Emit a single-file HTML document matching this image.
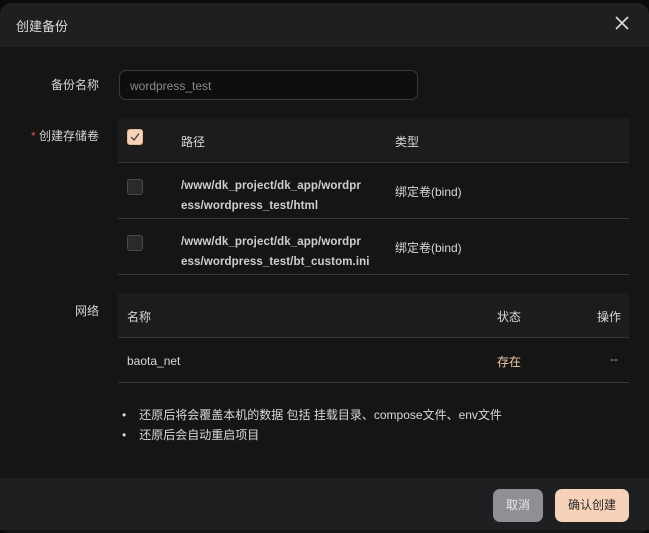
<!DOCTYPE html>
<html><head><meta charset="utf-8"><style>
*{margin:0;padding:0;box-sizing:border-box}
body{width:649px;height:533px;background:#0b0b0c;font-family:"Liberation Sans","Noto Sans CJK SC",sans-serif;color:#d6d6d6;font-size:12px;position:relative;overflow:hidden}
.dlg{position:absolute;left:0;top:3px;width:649px;height:530px;background:#151516;border-radius:12px 12px 10px 10px;overflow:hidden}
.hd{position:absolute;left:0;top:0;width:649px;height:44px;background:#1e1f21}
.hd .t{position:absolute;left:16px;top:13px;font-size:13px;color:#dcdcdc}
.x{position:absolute;left:615px;top:13px}
.lbl{position:absolute;right:550px;font-size:12px;color:#d4d4d4;white-space:nowrap}
.inp{position:absolute;left:119px;top:70px;width:299px;height:30px;border:1px solid #3a3a3d;border-radius:7px;background:#0e0e0f;color:#8c8c8c;font-size:12px;padding:8px 10px}
.abs{position:absolute}
.th{background:#1c1c1d}
.ln{position:absolute;left:118px;width:511px;height:1px;background:#37373a}
.cb{position:absolute;left:127px;width:16px;height:16px;border-radius:3px}
.s{position:absolute;white-space:nowrap;font-size:12px;color:#d8d8d8}
.p{font-weight:bold;color:#cfcfcf;font-size:11.5px;letter-spacing:0.1px}
.ft{position:absolute;left:0;top:478px;width:649px;height:52px;background:#1e1f21}
.btn{position:absolute;top:489px;height:33px;border-radius:7px;font-size:12px;text-align:center;line-height:33px}
</style></head><body>
<div class="dlg">
<div class="hd"><div class="t">创建备份</div>
<svg class="x" width="14" height="14" viewBox="0 0 14 14"><path d="M1 1L13 13M13 1L1 13" stroke="#ddd" stroke-width="1.6"/></svg></div>
</div>
<div class="lbl" style="top:76px">备份名称</div>
<div class="inp">wordpress_test</div>
<div class="lbl" style="top:127px"><span style="color:#d9534f">*</span> 创建存储卷</div>
<div class="abs th" style="left:118px;top:118px;width:511px;height:45px"></div>
<div class="ln" style="top:162px"></div>
<div class="ln" style="top:218px"></div>
<div class="ln" style="top:274px"></div>
<div class="cb" style="top:129px;background:#f6d3b8;border:1px solid #e5b894"><svg width="14" height="14" viewBox="0 0 14 14" style="position:absolute;left:0;top:0"><path d="M3 7L6 10L11 3.5" stroke="#333" stroke-width="1.2" fill="none"/></svg></div>
<div class="s" style="left:181px;top:133px">路径</div>
<div class="s" style="left:395px;top:133px">类型</div>
<div class="cb" style="top:179px;background:#2a2a2c;border:1px solid #4a4a4d"></div>
<div class="s p" style="left:181px;top:176px;line-height:20px">/www/dk_project/dk_app/wordpr<br>ess/wordpress_test/html</div>
<div class="s" style="left:395px;top:183px">绑定卷(bind)</div>
<div class="cb" style="top:235px;background:#2a2a2c;border:1px solid #4a4a4d"></div>
<div class="s p" style="left:181px;top:232px;line-height:20px">/www/dk_project/dk_app/wordpr<br>ess/wordpress_test/bt_custom.ini</div>
<div class="s" style="left:395px;top:239px">绑定卷(bind)</div>
<div class="lbl" style="top:302px">网络</div>
<div class="abs th" style="left:118px;top:293px;width:511px;height:44px"></div>
<div class="ln" style="top:337px"></div>
<div class="ln" style="top:382px"></div>
<div class="s" style="left:127px;top:308px">名称</div>
<div class="s" style="left:497px;top:308px">状态</div>
<div class="s" style="left:597px;top:308px">操作</div>
<div class="s" style="left:127px;top:354px">baota_net</div>
<div class="s" style="left:497px;top:353px;color:#f0c9a8">存在</div>
<div class="s" style="left:610px;top:352px;color:#aaa">--</div>
<div class="s" style="left:122px;top:406px"><span style="margin-right:13px">•</span>还原后将会覆盖本机的数据 包括 挂载目录、compose文件、env文件</div>
<div class="s" style="left:122px;top:426px"><span style="margin-right:13px">•</span>还原后会自动重启项目</div>
<div class="ft"></div>
<div class="btn" style="left:493px;width:50px;background:#8e9096;color:#e8e8e8">取消</div>
<div class="btn" style="left:555px;width:74px;background:#f6d3b8;color:#2a2a2a">确认创建</div>
</body></html>
